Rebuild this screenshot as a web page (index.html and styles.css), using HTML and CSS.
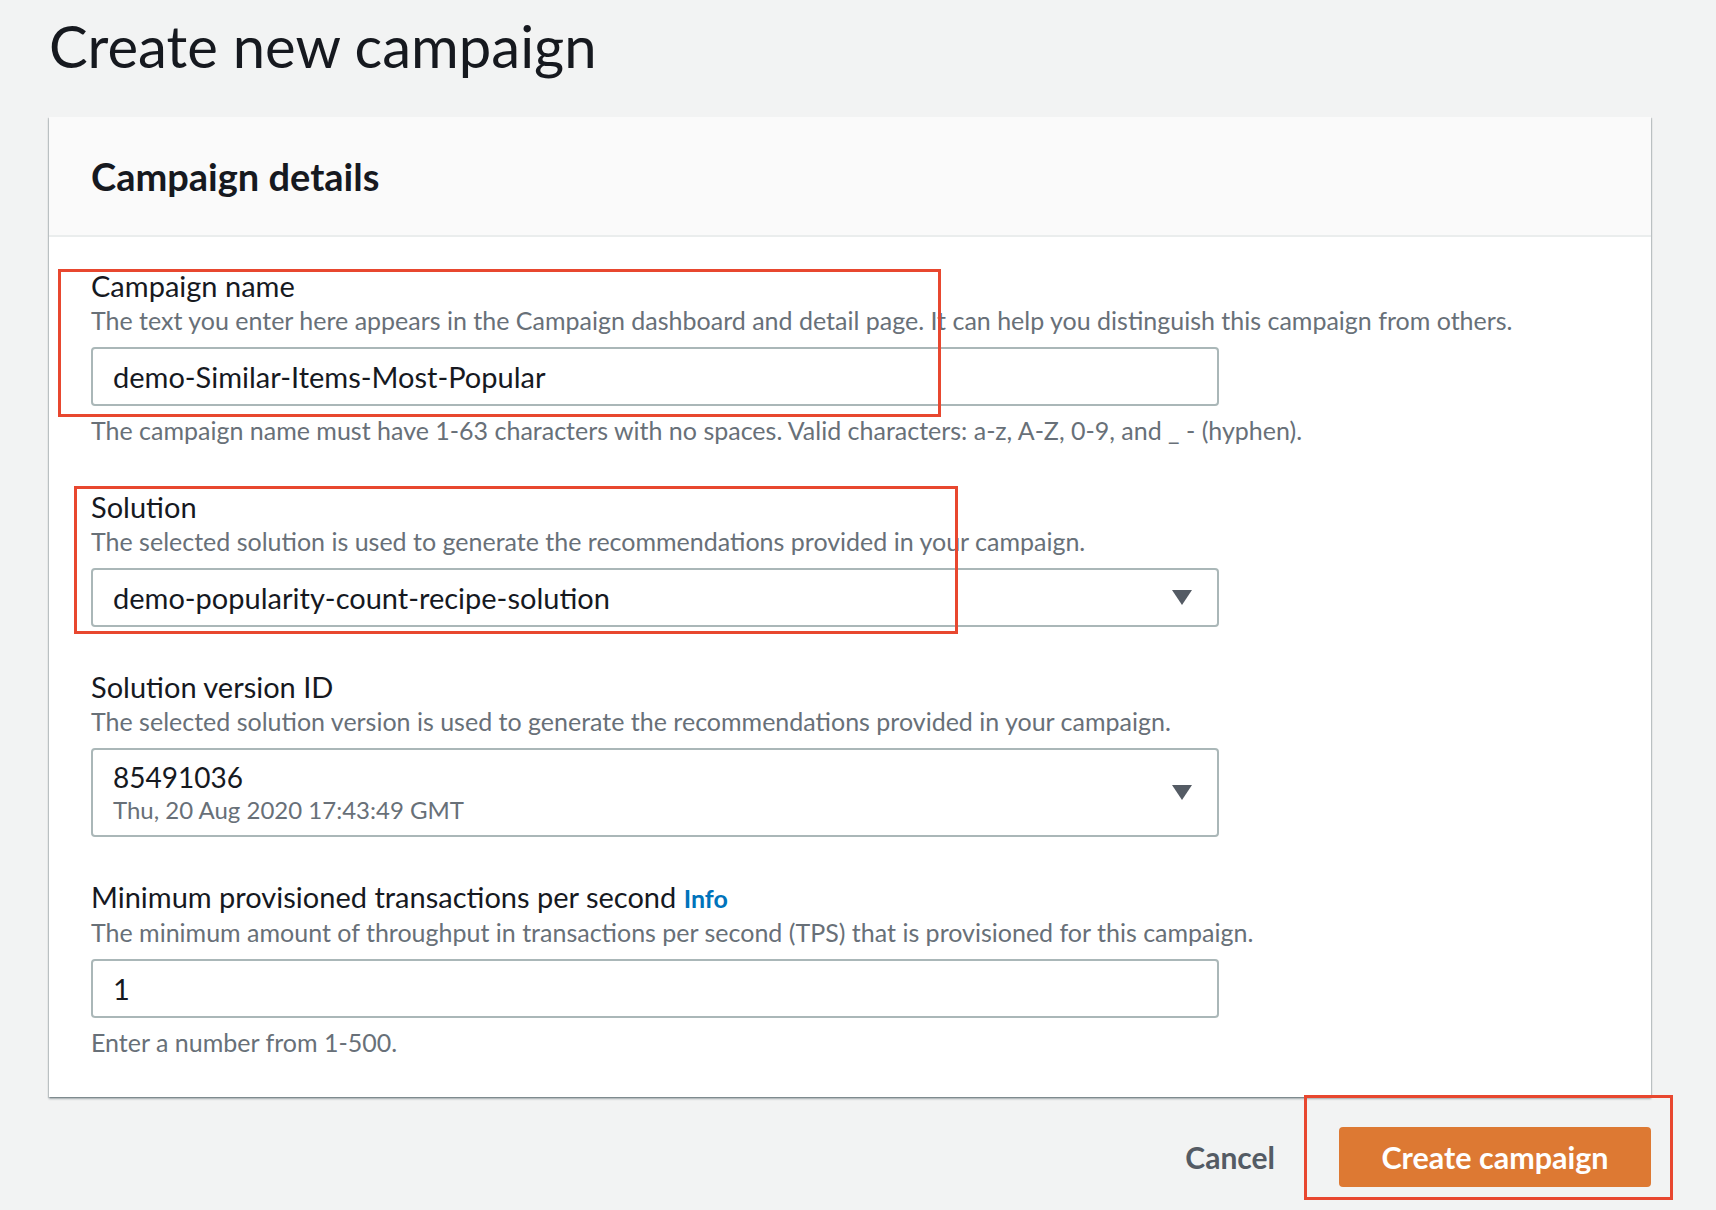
FILE: index.html
```html
<!DOCTYPE html>
<html lang="en">
<head>
    <meta charset="UTF-8">
    <title>Create new campaign</title>
    <link rel="stylesheet" href="styles.css">
</head>
<body>
    <div class="page">
        <h1 class="page-title">Create new campaign</h1>

        <div class="container">
            <div class="container-header">
                <h2>Campaign details</h2>
            </div>

            <div class="container-body">
                <div class="field">
                    <span class="mark mark-name"></span>
                    <div class="field-label">Campaign name</div>
                    <div class="field-desc">The text you enter here appears in the Campaign dashboard and detail page. It can help you distinguish this campaign from others.</div>
                    <div class="input">demo-Similar-Items-Most-Popular</div>
                    <div class="field-hint">The campaign name must have 1-63 characters with no spaces. Valid characters: a-z, A-Z, 0-9, and _ - (hyphen).</div>
                </div>

                <div class="field">
                    <span class="mark mark-solution"></span>
                    <div class="field-label">Solution</div>
                    <div class="field-desc">The selected solution is used to generate the recommendations provided in your campaign.</div>
                    <div class="input select">
                        <span>demo-popularity-count-recipe-solution</span>
                        <span class="caret"></span>
                    </div>
                </div>

                <div class="field">
                    <div class="field-label">Solution version ID</div>
                    <div class="field-desc">The selected solution version is used to generate the recommendations provided in your campaign.</div>
                    <div class="input select select-tall">
                        <div class="option">
                            <div class="option-value">85491036</div>
                            <div class="option-meta">Thu, 20 Aug 2020 17:43:49 GMT</div>
                        </div>
                        <span class="caret"></span>
                    </div>
                </div>

                <div class="field">
                    <div class="field-label">Minimum provisioned transactions per second <a class="info" href="#">Info</a></div>
                    <div class="field-desc">The minimum amount of throughput in transactions per second (TPS) that is provisioned for this campaign.</div>
                    <div class="input">1</div>
                    <div class="field-hint">Enter a number from 1-500.</div>
                </div>
            </div>
        </div>

        <div class="actions">
            <button class="btn-link">Cancel</button>
            <div class="primary-wrap">
                <span class="mark mark-create"></span>
                <button class="btn-primary">Create campaign</button>
            </div>
        </div>
    </div>
</body>
</html>
```

FILE: styles.css
```css
body {
    margin: 0;
    background-color: #f2f3f3;
    font-family: Lato, "Open Sans", sans-serif;
    color: #16191f;
}
.page {
    width: 1602px;
    margin-left: 49px;
    padding-bottom: 16px;
}
.page-title {
    margin: 11px 0 36px 0;
    font-size: 58px;
    line-height: 70px;
    font-weight: 400;
}
.container {
    background-color: #fff;
    box-shadow: 0 2px 2px 0 rgba(0, 28, 36, 0.3), 1px 1px 1px 0 rgba(0, 28, 36, 0.15), -1px 1px 1px 0 rgba(0, 28, 36, 0.15);
}
.container-header {
    background-color: #fafafa;
    border-bottom: 2px solid #eaeded;
    padding: 37px 42px 37px 42px;
}
.container-header h2 {
    margin: 0;
    font-size: 38px;
    line-height: 44px;
    font-weight: 700;
}
.container-body {
    padding: 32px 42px 38px 42px;
    display: flex;
    flex-direction: column;
    gap: 43px;
}
.field {
    position: relative;
}
.field-label {
    font-size: 29px;
    line-height: 34px;
}
.field-desc,
.field-hint {
    font-size: 25px;
    line-height: 34px;
    color: #687078;
}
.field-hint {
    margin-top: 7px;
}
.info {
    font-size: 25px;
    font-weight: 700;
    color: #0073bb;
    text-decoration: none;
}
.input {
    box-sizing: border-box;
    width: 1128px;
    height: 59px;
    margin-top: 10px;
    padding: 0 20px;
    border: 2px solid #aab7b8;
    border-radius: 4px;
    display: flex;
    align-items: center;
    font-size: 29px;
}
.select {
    justify-content: space-between;
    padding-right: 25px;
}
.select-tall {
    height: 89px;
}
.option-value {
    font-size: 28px;
    line-height: 34px;
}
.option-meta {
    font-size: 24px;
    line-height: 32px;
    color: #687078;
}
.caret {
    width: 0;
    height: 0;
    border-left: 10px solid transparent;
    border-right: 10px solid transparent;
    border-top: 15px solid #545b64;
}
.actions {
    margin-top: 30px;
    display: flex;
    justify-content: flex-end;
    align-items: center;
    gap: 50px;
}
.btn-link {
    background: none;
    border: none;
    padding: 0 14px;
    font-family: inherit;
    font-size: 30px;
    font-weight: 700;
    color: #545b64;
    cursor: pointer;
}
.primary-wrap {
    position: relative;
}
.btn-primary {
    display: block;
    width: 312px;
    height: 60px;
    background-color: #dd7933;
    color: #fff;
    border: none;
    border-radius: 4px;
    font-family: inherit;
    font-size: 30.5px;
    font-weight: 700;
    cursor: pointer;
}
.mark {
    position: absolute;
    box-sizing: border-box;
    border: 3px solid #e8472f;
    pointer-events: none;
}
.mark-name {
    top: 0;
    left: -33px;
    width: 883px;
    height: 148px;
}
.mark-solution {
    top: -4px;
    left: -17px;
    width: 884px;
    height: 148px;
}
.mark-create {
    top: -32px;
    left: -35px;
    width: 369px;
    height: 105px;
}
```
